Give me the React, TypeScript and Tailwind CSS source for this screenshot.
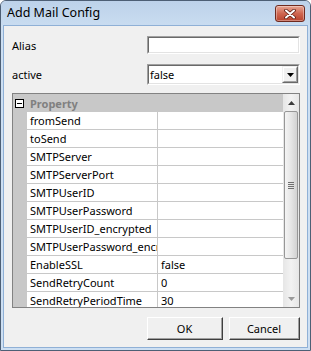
import React from "react";

const rows: [string, string][] = [
  ["fromSend", ""],
  ["toSend", ""],
  ["SMTPServer", ""],
  ["SMTPServerPort", ""],
  ["SMTPUserID", ""],
  ["SMTPUserPassword", ""],
  ["SMTPUserID_encrypted", ""],
  ["SMTPUserPassword_encrypted", ""],
  ["EnableSSL", "false"],
  ["SendRetryCount", "0"],
  ["SendRetryPeriodTime", "30"],
];

function Sunken({ children, className = "" }: { children?: React.ReactNode; className?: string }) {
  return (
    <div className={`border-t border-l border-t-[#a0a0a0] border-l-[#a0a0a0] border-b border-r border-b-white border-r-white ${className}`}>
      <div className="w-full h-full border-t border-l border-t-[#696969] border-l-[#696969] border-b border-r border-b-[#e3e3e3] border-r-[#e3e3e3] bg-white flex items-center">
        {children}
      </div>
    </div>
  );
}

function ClassicButton({ label, className = "" }: { label: string; className?: string }) {
  return (
    <div className={`border-t border-l border-t-white border-l-white border-b border-r border-b-[#3f3f3f] border-r-[#3f3f3f] ${className}`}>
      <div className="w-full h-full border-b border-r border-b-[#a0a0a0] border-r-[#a0a0a0] bg-[#f0f0f0] flex items-center justify-center">
        {label}
      </div>
    </div>
  );
}

export default function App() {
  return (
    <div className="w-[311px] h-[351px] flex flex-col bg-[#cddff2] border border-[#4d5f75] rounded-t-[6px] overflow-hidden font-['Noto_Sans','Liberation_Sans',Arial,sans-serif] text-[11px] text-black leading-none select-none">
      {/* Title bar */}
      <div className="h-[24px] shrink-0 flex items-start justify-between pl-[6px] pr-[5px] bg-gradient-to-b from-[#bdd2ea] to-[#c9dcf0]">
        <span className="mt-[6px] text-[12.5px] text-black">Add Mail Config</span>
        <div className="mt-[4px] w-[30px] h-[17px] rounded-[3px] border border-[#6f2a1f] bg-gradient-to-b from-[#e6a594] via-[#cf6650] to-[#b9432d] shadow-[inset_0_0_0_1px_rgba(255,255,255,0.35)] flex items-center justify-center">
          <svg width="12" height="10" viewBox="0 0 12 10">
            <path d="M2 1.5 L10 8.5 M10 1.5 L2 8.5" stroke="#5a1c12" strokeWidth="3.6" strokeLinecap="round" />
            <path d="M2 1.5 L10 8.5 M10 1.5 L2 8.5" stroke="#ffffff" strokeWidth="2" strokeLinecap="round" />
          </svg>
        </div>
      </div>

      {/* Client area */}
      <div className="flex-1 flex flex-col px-[2px] pb-[2px]">
        <div className="flex-1 flex flex-col border border-[#8fb0d6] bg-[#f0f0f0]">
          {/* Alias */}
          <div className="mt-[10px] h-[18px] flex items-center">
            <div className="w-[143px] pl-[8px]">Alias</div>
            <Sunken className="w-[153px] h-[18px]" />
          </div>
          {/* active */}
          <div className="mt-[10px] h-[21px] flex items-center">
            <div className="w-[143px] pl-[8px]">active</div>
            <Sunken className="w-[153px] h-[21px]">
              <div className="flex-1 pl-[1px]">false</div>
              <div className="w-[16px] h-full border-t border-l border-t-[#f0f0f0] border-l-[#f0f0f0] border-b border-r border-b-[#696969] border-r-[#696969]">
                <div className="w-full h-full border-t border-l border-t-white border-l-white border-b border-r border-b-[#a0a0a0] border-r-[#a0a0a0] bg-[#f0f0f0] flex items-center justify-center">
                  <svg width="7" height="4" viewBox="0 0 7 4">
                    <path d="M0 0 H7 L3.5 4 Z" fill="#000" />
                  </svg>
                </div>
              </div>
            </Sunken>
          </div>

          {/* Property grid */}
          <div className="mt-[8px] ml-[8px] w-[288px] h-[215px] border border-[#828282] flex overflow-hidden bg-white">
            <div className="w-[270px] flex flex-col overflow-hidden">
              <div className="h-[18px] shrink-0 bg-[#c8c8c8] flex items-center pl-[2px]">
                <svg width="9" height="9" viewBox="0 0 9 9">
                  <rect x="0.5" y="0.5" width="8" height="8" fill="#ffffff" stroke="#000" />
                  <path d="M2 4.5 H7" stroke="#000" />
                </svg>
                <span className="ml-[6px] font-bold text-[#808080]">Property</span>
              </div>
              {rows.map(([k, v]) => (
                <div key={k} className="h-[18px] shrink-0 flex">
                  <div className="w-[14px] bg-[#c8c8c8]" />
                  <div className="w-[131px] border-r border-b border-[#c8c8c8] pl-[3px] flex items-center overflow-hidden whitespace-nowrap">
                    {k}
                  </div>
                  <div className="w-[125px] border-b border-[#c8c8c8] pl-[3px] flex items-center whitespace-nowrap">
                    {v}
                  </div>
                </div>
              ))}
            </div>
            {/* Scrollbar */}
            <div className="w-[16px] flex flex-col bg-gradient-to-r from-[#e6e6e6] via-[#f2f2f2] to-[#e6e6e6]">
              <div className="h-[17px] shrink-0 flex items-center justify-center">
                <svg width="7" height="4" viewBox="0 0 7 4">
                  <path d="M3.5 0 L7 4 H0 Z" fill="#3c3c3c" />
                </svg>
              </div>
              <div className="h-[148px] shrink-0 mx-[1px] rounded-[2px] border border-[#979797] bg-gradient-to-r from-[#f4f4f4] via-[#e6e6e6] to-[#d2d2d2] flex items-center justify-center">
                <div className="flex flex-col gap-[1px]">
                  <div className="w-[6px] h-[1px] bg-[#6f6f6f]" />
                  <div className="w-[6px] h-[1px] bg-[#6f6f6f]" />
                  <div className="w-[6px] h-[1px] bg-[#6f6f6f]" />
                  <div className="w-[6px] h-[1px] bg-[#6f6f6f]" />
                </div>
              </div>
              <div className="flex-1" />
              <div className="h-[17px] shrink-0 flex items-center justify-center">
                <svg width="7" height="4" viewBox="0 0 7 4">
                  <path d="M0 0 H7 L3.5 4 Z" fill="#9a9a9a" />
                </svg>
              </div>
            </div>
          </div>

          {/* Buttons */}
          <div className="mt-[9px] h-[23px] flex pl-[143px]">
            <ClassicButton label="OK" className="w-[76px] h-[23px]" />
            <ClassicButton label="Cancel" className="ml-[6px] w-[71px] h-[23px]" />
          </div>
        </div>
      </div>
    </div>
  );
}
